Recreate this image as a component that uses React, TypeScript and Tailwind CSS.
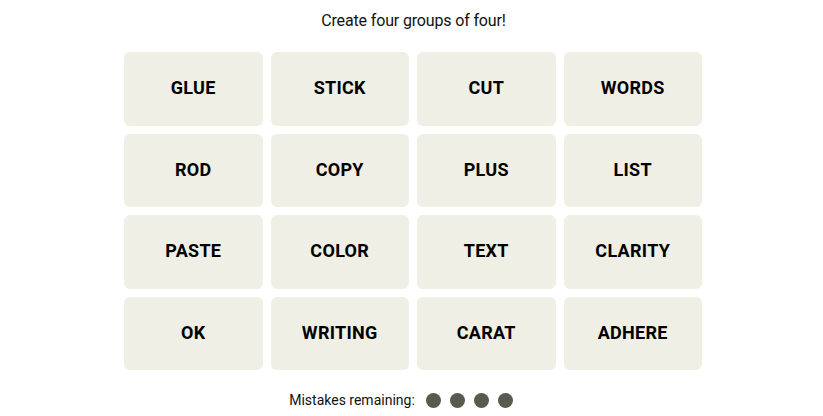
const words = [
  "GLUE", "STICK", "CUT", "WORDS",
  "ROD", "COPY", "PLUS", "LIST",
  "PASTE", "COLOR", "TEXT", "CLARITY",
  "OK", "WRITING", "CARAT", "ADHERE",
];

export default function App() {
  return (
    <div className="w-[823px] h-[416px] bg-white flex flex-col items-center" style={{ fontFamily: "Roboto, 'Liberation Sans', sans-serif" }}>
      <div className="mt-[9px] h-[24px] leading-[24px] text-[16px] text-[#121212] ml-[4px] tracking-[-0.15px]">Create four groups of four!</div>
      <div className="mt-[19px] grid grid-cols-[repeat(4,138.5px)] grid-rows-[repeat(4,73.5px)] gap-x-[8px] gap-y-[8px] ml-[3px]">
        {words.map((w) => (
          <div key={w} className="bg-[#efefe6] rounded-[6px] flex items-center justify-center pb-[2px] text-[18px] font-bold text-black tracking-[0.3px]">
            {w}
          </div>
        ))}
      </div>
      <div className="mt-[18px] flex items-center h-[24px] mr-[21px]">
        <span className="text-[14px] text-[#121212]">Mistakes remaining:</span>
        <div className="flex gap-[9px] ml-[11px]">
          {[0, 1, 2, 3].map((i) => (
            <span key={i} className="w-[15px] h-[15px] rounded-full bg-[#5a594e]" />
          ))}
        </div>
      </div>
    </div>
  );
}
